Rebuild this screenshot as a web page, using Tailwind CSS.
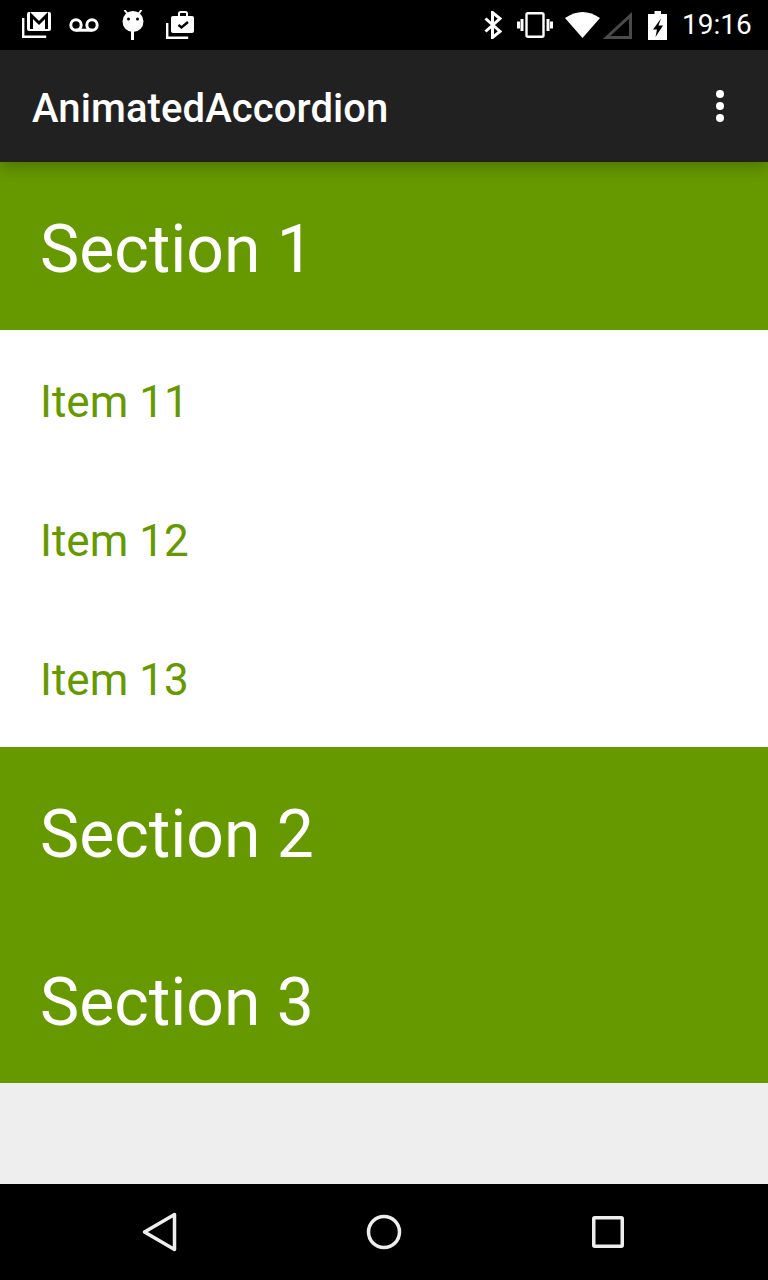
<!DOCTYPE html>
<html lang="en">
<head>
    <meta charset="UTF-8" />
    <meta name="viewport" content="width=device-width, initial-scale=1.0" />
    <script src="https://cdn.jsdelivr.net/npm/@tailwindcss/browser@4"></script>
    <title>AnimatedAccordion</title>
</head>
<body class="bg-[#eeeeee] font-['Roboto',sans-serif]">
    <div class="flex flex-col w-[768px] h-[1280px] overflow-hidden">
        <!-- status bar -->
        <div class="h-[50px] bg-black flex items-center pl-[22px] shrink-0">
            <svg class="w-[30px] h-[28px]" viewBox="0 0 30 28" fill="none">
                <path d="M1.200 7v18.800h23" stroke="#fff" stroke-width="2.400"/>
                <rect x="5" y="1" width="24" height="19" rx="2" fill="#fff"/>
                <path d="M9.500 18V4.500l7.500 7.500 7.500-7.500V18" stroke="#000" stroke-width="3" fill="none"/>
            </svg>
            <svg class="w-[30px] h-[14px] ml-[17px]" viewBox="0 0 30 14" fill="none" stroke="#fff" stroke-width="3">
                <circle cx="7" cy="7" r="5.200"/>
                <circle cx="23" cy="7" r="5.200"/>
                <path d="M7 12.200h16"/>
            </svg>
            <svg class="w-[22px] h-[30px] ml-[23px]" viewBox="0 0 22 30" fill="#fff">
                <path d="M2.500 0l4 5M19.500 0l-4 5" stroke="#fff" stroke-width="2"/>
                <circle cx="11" cy="11.500" r="10.500"/>
                <rect x="9" y="20" width="3" height="10"/>
                <circle cx="6.500" cy="9" r="1.500" fill="#000"/>
                <circle cx="15.500" cy="9" r="1.500" fill="#000"/>
            </svg>
            <svg class="w-[28px] h-[28px] ml-[22px]" viewBox="0 0 28 28" fill="none">
                <path d="M1.200 12v14.800h21" stroke="#fff" stroke-width="2.400"/>
                <path d="M13 5V2.500A1.500 1.500 0 0 1 14.500 1h5A1.500 1.500 0 0 1 21 2.500V5" stroke="#fff" stroke-width="2"/>
                <rect x="5" y="5" width="23" height="17" rx="2" fill="#fff"/>
                <path d="M12.500 14l3 2.500 6.500-5.500" stroke="#000" stroke-width="2.400"/>
            </svg>
            <svg class="w-[18px] h-[28px] ml-[290px]" viewBox="0 0 18 28" fill="none" stroke="#fff" stroke-width="3">
                <path d="M1.500 7.500L16 20.500 8.500 26.500V1.500L16 7.500 1.500 20.500"/>
            </svg>
            <svg class="w-[36px] h-[26px] ml-[15px]" viewBox="0 0 36 26" fill="none" stroke="#fff">
                <rect x="9.500" y="1.200" width="17" height="23.600" rx="1.500" stroke-width="2.400"/>
                <path d="M5 7v12M1.500 9.500v7M31 7v12M34.500 9.500v7" stroke-width="3"/>
            </svg>
            <svg class="w-[35px] h-[26px] ml-[12px]" viewBox="0 0 35 26" fill="#fff">
                <path d="M0 6Q17.500 -6 35 6L17.500 26Z"/>
            </svg>
            <svg class="w-[29px] h-[27px] ml-[3px]" viewBox="0 0 29 27" fill="none" stroke="#4a4a4a" stroke-width="3">
                <path d="M27.500 3.500V25.500H3.500Z"/>
            </svg>
            <svg class="w-[19px] h-[29px] ml-[16px]" viewBox="0 0 19 29" fill="#fff">
                <path d="M6.500 0h6.500v3h6v26H0V3h6.500Z"/>
                <path d="M13 7.500L5 18.500h4L7.500 26 15 14.500h-4.500Z" fill="#000"/>
            </svg>
            <span class="text-[28px] leading-none text-white ml-[15px]">19:16</span>
        </div>

        <!-- action bar -->
        <div class="relative z-10 h-[112px] bg-[#212121] shrink-0 flex items-center justify-between pl-[32px] pr-[44px] shadow-[0_6px_14px_rgba(0,0,0,0.22)]">
            <span class="text-[40px] font-medium leading-none tracking-[0.1px] text-white mt-[6px]">AnimatedAccordion</span>
            <div class="flex flex-col gap-[4px]">
                <span class="w-[8px] h-[8px] rounded-full bg-white"></span>
                <span class="w-[8px] h-[8px] rounded-full bg-white"></span>
                <span class="w-[8px] h-[8px] rounded-full bg-white"></span>
            </div>
        </div>

        <!-- accordion -->
        <div class="h-[168px] bg-[#669900] flex items-center pl-[40px] pt-[8px] shrink-0">
            <span class="text-[66px] leading-none text-white">Section 1</span>
        </div>
        <div class="bg-white shrink-0">
            <div class="h-[139px] flex items-center pl-[40px] pt-[4px] text-[44px] leading-none text-[#669900]">Item 11</div>
            <div class="h-[139px] flex items-center pl-[40px] pt-[4px] text-[44px] leading-none text-[#669900]">Item 12</div>
            <div class="h-[139px] flex items-center pl-[40px] pt-[4px] text-[44px] leading-none text-[#669900]">Item 13</div>
        </div>
        <div class="h-[168px] bg-[#669900] flex items-center pl-[40px] pt-[8px] shrink-0">
            <span class="text-[66px] leading-none text-white">Section 2</span>
        </div>
        <div class="h-[168px] bg-[#669900] flex items-center pl-[40px] pt-[8px] shrink-0">
            <span class="text-[66px] leading-none text-white">Section 3</span>
        </div>
        <div class="flex-1"></div>

        <!-- nav bar -->
        <div class="h-[96px] bg-black flex items-center shrink-0 pl-[142px] pb-[1px]">
            <svg class="w-[35px] h-[40px]" viewBox="0 0 35 40" fill="none" stroke="#eeeeee" stroke-width="3.500" stroke-linejoin="round">
                <path d="M2.500 20L32.500 2.500V37.500Z"/>
            </svg>
            <svg class="w-[36px] h-[36px] ml-[189px]" viewBox="0 0 36 36" fill="none" stroke="#eeeeee" stroke-width="3.500">
                <circle cx="18" cy="18" r="15.500"/>
            </svg>
            <svg class="w-[32px] h-[32px] ml-[190px]" viewBox="0 0 32 32" fill="none" stroke="#eeeeee" stroke-width="3.500" stroke-linejoin="round">
                <rect x="1.750" y="1.750" width="28.500" height="28.500" rx="1"/>
            </svg>
        </div>
    </div>
</body>
</html>
